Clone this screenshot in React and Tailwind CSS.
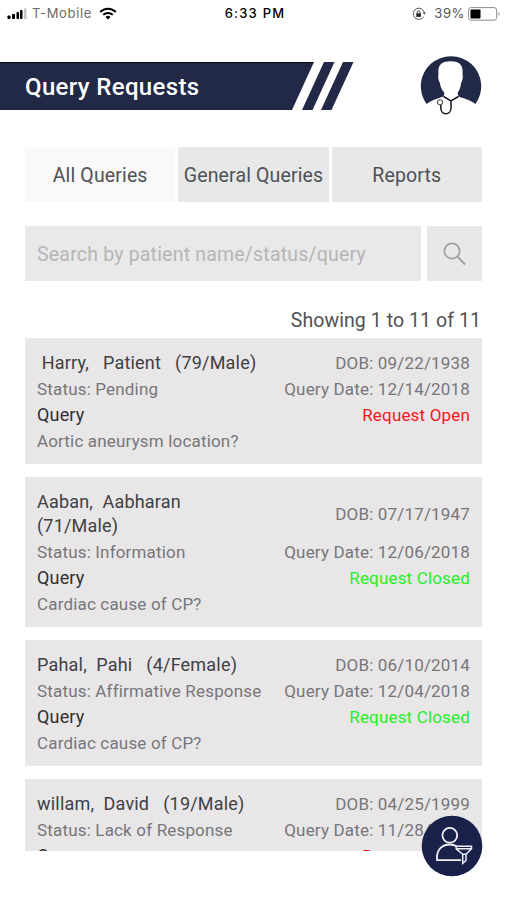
const QUERIES = [
  {
    name: ' Harry,   Patient   (79/Male)',
    dob: '09/22/1938',
    status: 'Pending',
    date: '12/14/2018',
    open: true,
    text: 'Aortic aneurysm location?',
  },
  {
    name: 'Aaban,  Aabharan   (71/Male)',
    dob: '07/17/1947',
    status: 'Information',
    date: '12/06/2018',
    open: false,
    text: 'Cardiac cause of CP?',
  },
  {
    name: 'Pahal,  Pahi   (4/Female)',
    dob: '06/10/2014',
    status: 'Affirmative Response',
    date: '12/04/2018',
    open: false,
    text: 'Cardiac cause of CP?',
  },
  {
    name: 'willam,  David   (19/Male)',
    dob: '04/25/1999',
    status: 'Lack of Response',
    date: '11/28/2018',
    open: true,
    text: '',
  },
];

function StatusBar() {
  return (
    <div className="h-[27px] shrink-0 grid grid-cols-3 items-center pl-[7px] pr-[5px] font-['Inter','Liberation_Sans',sans-serif] text-[13px] text-black">
      <div className="flex items-center">
        <svg width="20" height="12" viewBox="0 0 20 12">
          <rect x="0.5" y="7.5" width="3" height="3.5" rx="0.7" />
          <rect x="5" y="6" width="3" height="5" rx="0.7" />
          <rect x="9.5" y="4" width="2.500" height="7" rx="0.7" />
          <rect x="13" y="2" width="2.500" height="9" rx="0.7" />
          <rect x="17" y="0.5" width="2.500" height="10.5" fill="#c4c4c4" />
        </svg>
        <span className="ml-[5px] text-[#6b6b6b] tracking-[0.65px]">T-Mobile</span>
        <svg className="ml-[7px] -mt-px" width="18" height="13" viewBox="0 0 18 13" fill="none" stroke="#000" strokeWidth="2">
          <path d="M1.2 5C5.5 0.6 12.5 0.6 16.8 5" />
          <path d="M4.2 7.9c2.7-2.6 6.9-2.6 9.6 0" />
          <path d="M6.5 10a3.6 3.6 0 0 1 5 0L9 12.6z" fill="#000" stroke="none" />
        </svg>
      </div>
      <div className="pl-0.5 text-center font-medium whitespace-nowrap tracking-[1.2px]">6:33 PM</div>
      <div className="flex items-center justify-end">
        <svg width="14" height="14" viewBox="0 0 14 14" fill="none" stroke="#555" strokeWidth="1">
          <path d="M11.7 9.6A5.6 5.6 0 1 1 12.4 6" />
          <path d="M10.7 5.6h3.2l-1.6 2.2z" fill="#555" stroke="none" />
          <rect x="4.3" y="6.3" width="4.6" height="3.6" fill="#222" stroke="none" />
          <path d="M5.2 6.5V5.3a1.4 1.4 0 0 1 2.8 0v1.2" stroke="#333" />
        </svg>
        <span className="ml-2 text-[#555] tracking-[0.6px]">39%</span>
        <svg className="ml-[3px]" width="33" height="14" viewBox="0 0 33 14">
          <rect x="0.6" y="0.6" width="28" height="12.6" rx="2.5" fill="none" stroke="#8c8c8c" />
          <rect x="2.5" y="2.5" width="10" height="9" rx="0.8" />
          <path d="M30.4 5v4c1.6-.5 1.6-3.5 0-4z" fill="#999" />
        </svg>
      </div>
    </div>
  );
}

function DoctorAvatar() {
  return (
    <svg width="62" height="62" viewBox="0 0 62 62">
      <path
        d="M6.500 49A30.200 30.200 0 1 1 55.500 49C52 46 46 44 38.500 41.500L37.500 38C39.500 35 41 31.500 41 28C42.500 26 43.300 22 42.500 19C43.500 9.500 39 6.300 30.500 6.300C22 6.300 17.500 9.500 18.500 19C17.700 22 18.500 26 20 28C20 31.500 22 35 24.500 38L23.500 41.500C16 44 10 46 6.500 49Z"
        fill="#212946"
      />
      <g fill="none" stroke="#141720" strokeWidth="1.5">
        <path d="M23.500 41.500l7.500 4.500 7.500-4.500M31 46v7c0 3-2 5.700-5.200 5.700s-5-2.700-5-5.700v-3.400" />
        <circle cx="20" cy="47.200" r="2.500" strokeWidth="1.100" stroke="#555" />
      </g>
    </svg>
  );
}

function TitleBar() {
  return (
    <header className="mt-7 h-[62px] shrink-0 flex justify-between pr-6">
      <div className="mt-[7px] h-12 flex">
        <div className="w-[314px] h-12 pl-[25px] flex items-center bg-[#212946] border-t border-[#0c0e16] [clip-path:polygon(0_0,100%_0,292px_100%,0_100%)]">
          <h1 className="text-[24px] font-medium tracking-[0.35px] text-white whitespace-nowrap">Query Requests</h1>
        </div>
        <svg className="-ml-3" width="52" height="48" viewBox="0 0 52 48" fill="#212946">
          <path d="M22 0h10.500L10.500 48H0z" />
          <path d="M41 0h10.500L29.500 48H19z" />
        </svg>
      </div>
      <DoctorAvatar />
    </header>
  );
}

function Tabs() {
  return (
    <nav className="mt-[30px] h-[55px] shrink-0 grid grid-cols-3 gap-[3px] text-[19.5px] tracking-[0.14px] text-[#505256]">
      <button type="button" className="pt-0.5 bg-[#faf8f9] whitespace-nowrap">All Queries</button>
      <button type="button" className="pt-0.5 bg-[#e8e8e8] whitespace-nowrap">General Queries</button>
      <button type="button" className="pt-0.5 bg-[#e8e8e8] whitespace-nowrap">Reports</button>
    </nav>
  );
}

function SearchBar() {
  return (
    <div className="mt-6 h-[55px] shrink-0 flex gap-1.5">
      <input
        type="text"
        placeholder="Search by patient name/status/query"
        className="flex-1 min-w-0 bg-[#e9e9e9] px-3 pt-0.5 text-[19.5px] tracking-[0.2px] placeholder:text-[#b5b5b8] outline-none"
      />
      <button type="button" aria-label="Search" className="w-[55px] bg-[#e9e7e8] flex items-center justify-center">
        <svg width="24" height="24" viewBox="0 0 24 24" fill="none" stroke="#a29f9f" strokeWidth="1.7">
          <circle cx="9" cy="9" r="7.600" />
          <path d="M14.300 14.400L22 22.500" strokeWidth="2" />
        </svg>
      </button>
    </div>
  );
}

function QueryCard({ query }) {
  return (
    <article className="shrink-0 bg-[#e8e6e7] px-3 pt-3 pb-2.5 text-[17px] leading-[26px] tracking-[0.17px] text-[#77767a]">
      <div className="flex items-center justify-between py-px leading-6">
        <h2 className="w-[224px] text-[18px] tracking-[0.2px] text-[#404043] whitespace-pre-wrap">{query.name}</h2>
        <span>DOB: {query.dob}</span>
      </div>
      <div className="flex justify-between whitespace-nowrap">
        <span>Status: {query.status}</span>
        <span>Query Date: {query.date}</span>
      </div>
      <div className="flex justify-between">
        <span className="text-[18px] text-[#303033]">Query</span>
        {query.open ? (
          <span className="text-[#f5161b]">Request Open</span>
        ) : (
          <span className="text-[#25f025]">Request Closed</span>
        )}
      </div>
      {query.text && <p>{query.text}</p>}
    </article>
  );
}

function FilterButton() {
  return (
    <button type="button" aria-label="Filter patients" className="absolute left-[421px] top-[815px]">
      <svg width="62" height="62" viewBox="0 0 62 62" fill="none" stroke="#f1eff3" strokeWidth="1.800">
        <circle cx="31" cy="31" r="30.300" fill="#19214a" stroke="none" />
        <circle cx="28.800" cy="20.300" r="7.400" />
        <path d="M40 45.200H16v-3.700C16.500 34 21.500 29.500 28.800 29.500c2.700 0 4.900.6 6.800 1.700" />
        <path d="M35.200 31.200h15.300v2.600L45 39.300v6.200l-3.300 2.800v-9L35.200 33.800zM35.700 33.700h14.500M41.500 39.300h3.500" strokeWidth="1.500" />
      </svg>
    </button>
  );
}

export default function App() {
  return (
    <div className="relative w-[506px] h-[900px] overflow-hidden bg-white flex flex-col font-['Roboto',sans-serif]">
      <StatusBar />
      <TitleBar />
      <main className="flex flex-col pl-[25px] pr-6">
        <Tabs />
        <SearchBar />
        <p className="mt-[26px] h-[31px] pr-px leading-[27px] text-right text-[19.5px] tracking-[0.07px] text-[#505256]">
          Showing 1 to 11 of 11
        </p>
        <div className="h-[513px] overflow-hidden flex flex-col gap-[13px]">
          {QUERIES.map((query) => (
            <QueryCard key={query.name} query={query} />
          ))}
        </div>
      </main>
      <FilterButton />
    </div>
  );
}
